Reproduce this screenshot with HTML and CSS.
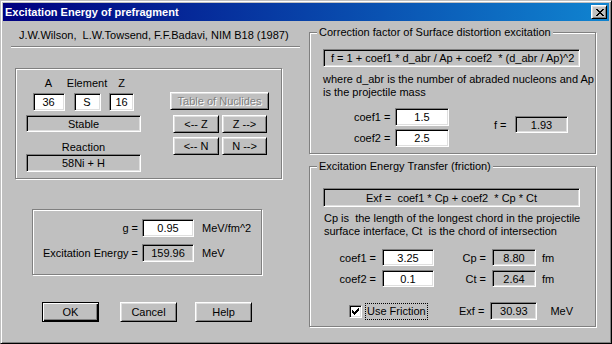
FILE: index.html
```html
<!DOCTYPE html>
<html lang="en">
<head>
    <meta charset="UTF-8">
    <title>Excitation Energy of prefragment</title>
    <link rel="stylesheet" href="styles.css">
</head>
<body>
    <div class="window">
        <!-- Title bar -->
        <div class="titlebar">
            <span class="title">Excitation Energy of prefragment</span>
            <button class="close-btn" aria-label="Close">
                <svg width="8" height="7" viewBox="0 0 8 7" shape-rendering="crispEdges">
                    <path d="M0 0h2v1H0z M6 0h2v1H6z M1 1h2v1H1z M5 1h2v1H5z M2 2h4v1H2z M3 3h2v1H3z M2 4h4v1H2z M1 5h2v1H1z M5 5h2v1H5z M0 6h2v1H0z M6 6h2v1H6z" fill="#000"/>
                </svg>
            </button>
        </div>

        <div class="client">
            <!-- Left column -->
            <div class="col-left">
                <div class="author">J.W.Wilson,&nbsp; L.W.Towsend, F.F.Badavi, NIM B18 (1987)</div>
                <div class="etched"></div>

                <div class="group nuclide-group">
                    <div class="nuclide">
                        <div class="nuclide-cols">
                            <div class="ncol"><span>A</span><input class="edit in-a" type="text" value="36"></div>
                            <div class="ncol"><span>Element</span><input class="edit in-el" type="text" value="S"></div>
                            <div class="ncol"><span>Z</span><input class="edit in-z" type="text" value="16"></div>
                        </div>
                        <div class="static stable">Stable</div>
                        <div class="caption">Reaction</div>
                        <div class="static reaction">58Ni + H</div>
                    </div>
                    <div class="nav-buttons">
                        <button class="btn btn-table" disabled>Table of Nuclides</button>
                        <div class="btn-grid">
                            <button class="btn">&lt;-- Z</button>
                            <button class="btn">Z --&gt;</button>
                            <button class="btn">&lt;-- N</button>
                            <button class="btn">N --&gt;</button>
                        </div>
                    </div>
                </div>

                <div class="group energy-group">
                    <div class="energy-grid">
                        <span class="lbl">g =</span>
                        <input class="edit" type="text" value="0.95">
                        <span class="unit">MeV/fm^2</span>
                        <span class="lbl">Excitation Energy =</span>
                        <div class="static">159.96</div>
                        <span class="unit">MeV</span>
                    </div>
                </div>

                <div class="dialog-buttons">
                    <button class="btn btn-default">OK</button>
                    <button class="btn btn-cancel">Cancel</button>
                    <button class="btn btn-help">Help</button>
                </div>
            </div>

            <!-- Right column -->
            <div class="col-right">
                <div class="group corr-group">
                    <span class="group-title">Correction factor of Surface distortion excitation</span>
                    <div class="static formula formula-left">f = 1 + coef1 * d_abr / Ap + coef2&nbsp; * (d_abr / Ap)^2</div>
                    <div class="desc">where d_abr is the number of abraded nucleons and Ap<br>is the projectile mass</div>
                    <div class="coef-row">
                        <div class="coef-grid">
                            <span class="lbl">coef1 =</span>
                            <input class="edit" type="text" value="1.5">
                            <span class="lbl">coef2 =</span>
                            <input class="edit" type="text" value="2.5">
                        </div>
                        <div class="f-result">
                            <span class="f-lbl">f =</span>
                            <div class="static f-box">1.93</div>
                        </div>
                    </div>
                </div>

                <div class="group friction-group">
                    <span class="group-title">Excitation Energy Transfer (friction)</span>
                    <div class="static formula exf-formula">Exf =&nbsp; coef1 * Cp + coef2&nbsp; * Cp * Ct</div>
                    <div class="desc desc-cp">Cp is&nbsp; the length of the longest chord in the projectile<br>surface interface, Ct&nbsp; is the chord of intersection</div>
                    <div class="fric-grid">
                        <span class="lbl">coef1 =</span>
                        <input class="edit" type="text" value="3.25">
                        <span class="lbl">Cp =</span>
                        <div class="static">8.80</div>
                        <span class="unit">fm</span>
                        <span class="lbl">coef2 =</span>
                        <input class="edit" type="text" value="0.1">
                        <span class="lbl">Ct =</span>
                        <div class="static">2.64</div>
                        <span class="unit">fm</span>
                    </div>
                    <div class="fric-bottom">
                        <div class="check-wrap">
                            <span class="checkbox">
                                <svg width="7" height="7" viewBox="0 0 7 7" shape-rendering="crispEdges">
                                    <path d="M0 2h1v3H0z M1 3h1v3H1z M2 4h1v3H2z M3 3h1v3H3z M4 2h1v3H4z M5 1h1v3H5z M6 0h1v3H6z" fill="#000"/>
                                </svg>
                            </span>
                            <span class="check-label">Use Friction</span>
                        </div>
                        <span class="exf-lbl">Exf =</span>
                        <div class="static exf-box">30.93</div>
                        <span class="exf-unit">MeV</span>
                    </div>
                </div>
            </div>
        </div>
    </div>
</body>
</html>
```

FILE: styles.css
```css
/* General Styles */
body {
    margin: 0;
    font: 11px "Liberation Sans", Arial, sans-serif;
    color: #000;
    background-color: #c0c0c0;
}
.window {
    width: 612px;
    height: 344px;
    box-sizing: border-box;
    border: 1px solid;
    border-color: #c0c0c0 #000 #000 #c0c0c0;
    box-shadow: inset 1px 1px #fff, inset -1px -1px #808080;
    padding: 2px;
    background-color: #c0c0c0;
    display: flex;
    flex-direction: column;
}

/* Title bar */
.titlebar {
    height: 18px;
    display: flex;
    align-items: center;
    justify-content: space-between;
    padding-right: 2px;
    background: linear-gradient(to right, #000080, #1084d0);
}
.title {
    color: #fff;
    font-weight: bold;
    padding-left: 2px;
    white-space: nowrap;
}
.close-btn {
    width: 16px;
    height: 14px;
    box-sizing: border-box;
    padding: 0 0 0 1px;
    display: flex;
    align-items: center;
    justify-content: center;
    background-color: #c0c0c0;
    border: 1px solid;
    border-color: #fff #000 #000 #fff;
    box-shadow: inset 1px 1px #dfdfdf, inset -1px -1px #808080;
}

.client {
    display: flex;
    flex: 1;
}
.col-left, .col-right {
    width: 303px;
}

/* Common controls */
.group {
    position: relative;
    box-sizing: border-box;
    border: 1px solid #808080;
    box-shadow: inset 1px 1px #fff, 1px 1px #fff;
}
.group-title {
    position: absolute;
    top: -7px;
    left: 7px;
    padding: 0 2px;
    line-height: 13px;
    background-color: #c0c0c0;
    white-space: nowrap;
}
.edit, .static {
    box-sizing: border-box;
    height: 18px;
    margin: 0;
    padding: 0;
    border: 1px solid;
    border-color: #808080 #fff #fff #808080;
    box-shadow: inset 1px 1px #000, inset -1px -1px #dfdfdf;
    font: inherit;
    color: #000;
    text-align: center;
    outline: none;
}
.edit {
    background-color: #fff;
}
.static {
    background-color: #c0c0c0;
    display: flex;
    align-items: center;
    justify-content: center;
    white-space: nowrap;
}
.btn {
    box-sizing: border-box;
    height: 18px;
    margin: 0;
    padding: 0;
    font: inherit;
    color: #000;
    background-color: #c0c0c0;
    border: 1px solid;
    border-color: #fff #000 #000 #fff;
    box-shadow: inset 1px 1px #dfdfdf, inset -1px -1px #808080;
    white-space: nowrap;
}
.btn:disabled {
    color: #808080;
    text-shadow: 1px 1px #fff;
}
.lbl {
    text-align: right;
    white-space: nowrap;
}
.unit {
    white-space: nowrap;
}

/* Left column */
.author {
    margin-top: 8px;
    padding-left: 16px;
    line-height: 13px;
    white-space: nowrap;
}
.etched {
    margin: 4px 0 0 8px;
    width: 289px;
    border-top: 1px solid #808080;
    border-bottom: 1px solid #fff;
}
.nuclide-group {
    margin: 20px 0 0 12px;
    width: 267px;
    height: 111px;
    padding: 8px 0 0 10px;
    display: flex;
}
.nuclide {
    width: 115px;
}
.nuclide-cols {
    display: grid;
    grid-template-columns: 33px 38px 25px;
    column-gap: 3px;
    margin-left: 6px;
}
.ncol {
    display: flex;
    flex-direction: column;
    align-items: center;
    line-height: 13px;
}
.ncol .edit {
    margin-top: 3px;
}
.in-a { width: 32px; }
.in-el { width: 27px; }
.in-z { width: 25px; }
.stable {
    margin-top: 4px;
    height: 17px;
}
.caption {
    margin-top: 9px;
    line-height: 13px;
    text-align: center;
}
.nav-buttons {
    margin-left: 29px;
    padding-top: 15px;
}
.btn-table {
    width: 99px;
}
.btn-grid {
    display: grid;
    grid-template-columns: 46px 45px;
    gap: 4px 3px;
    margin: 5px 0 0 3px;
}
.energy-group {
    margin: 30px 0 0 29px;
    width: 230px;
    height: 66px;
    padding: 9px 0 0 0;
}
.energy-grid {
    display: grid;
    grid-template-columns: 105px 52px auto;
    grid-auto-rows: 18px;
    column-gap: 4px;
    row-gap: 7px;
    align-items: center;
}
.energy-grid .unit {
    margin-left: 4px;
}
.dialog-buttons {
    display: flex;
    margin: 27px 0 0 39px;
}
.dialog-buttons .btn {
    width: 57px;
    height: 20px;
}
.btn-default {
    border-color: #000;
    box-shadow: inset 1px 1px #fff, inset -1px -1px #000, inset -2px -2px #808080;
}
.btn-cancel {
    margin-left: 21px;
}
.btn-help {
    margin-left: 18px;
}

/* Right column */
.corr-group {
    margin: 11px 0 0 3px;
    width: 287px;
    height: 122px;
    padding: 16px 0 0 13px;
}
.formula {
    width: 257px;
}
.formula-left {
    justify-content: flex-start;
    padding-left: 7px;
}
.desc {
    margin-top: 6px;
    line-height: 13px;
    white-space: nowrap;
}
.coef-row {
    display: flex;
    margin-top: 9px;
}
.coef-grid {
    display: grid;
    grid-template-columns: 35px 54px;
    grid-auto-rows: 18px;
    column-gap: 6px;
    row-gap: 3px;
    align-items: center;
    margin-left: 31px;
}
.f-result {
    display: flex;
    align-items: center;
    margin: 8px 0 0 45px;
    height: 17px;
}
.f-lbl {
    width: 15px;
}
.f-box {
    width: 53px;
    height: 17px;
    margin-left: 6px;
}
.friction-group {
    margin: 12px 0 0 3px;
    width: 287px;
    height: 161px;
    padding: 21px 0 0 13px;
}
.exf-formula {
    height: 19px;
}
.desc-cp {
    margin-top: 5px;
    padding-left: 1px;
}
.fric-grid {
    display: grid;
    grid-template-columns: 40px 52px 46px 44px auto;
    grid-auto-rows: 17px;
    column-gap: 6px;
    row-gap: 4px;
    align-items: center;
    margin: 11px 0 0 13px;
}
.fric-grid .edit, .fric-grid .static {
    height: 17px;
}
.fric-bottom {
    display: flex;
    align-items: center;
    height: 18px;
    margin: 15px 0 0 26px;
}
.check-wrap {
    display: flex;
    align-items: center;
    width: 110px;
}
.checkbox {
    box-sizing: border-box;
    width: 13px;
    height: 13px;
    display: flex;
    align-items: center;
    justify-content: center;
    background-color: #fff;
    border: 1px solid;
    border-color: #808080 #fff #fff #808080;
    box-shadow: inset 1px 1px #000, inset -1px -1px #dfdfdf;
}
.check-label {
    margin-left: 3px;
    padding: 0 1px;
    line-height: 15px;
    border: 1px dotted #000;
    white-space: nowrap;
}
.exf-box {
    width: 47px;
    margin-left: 6px;
}
.exf-unit {
    margin-left: 13px;
}
```
